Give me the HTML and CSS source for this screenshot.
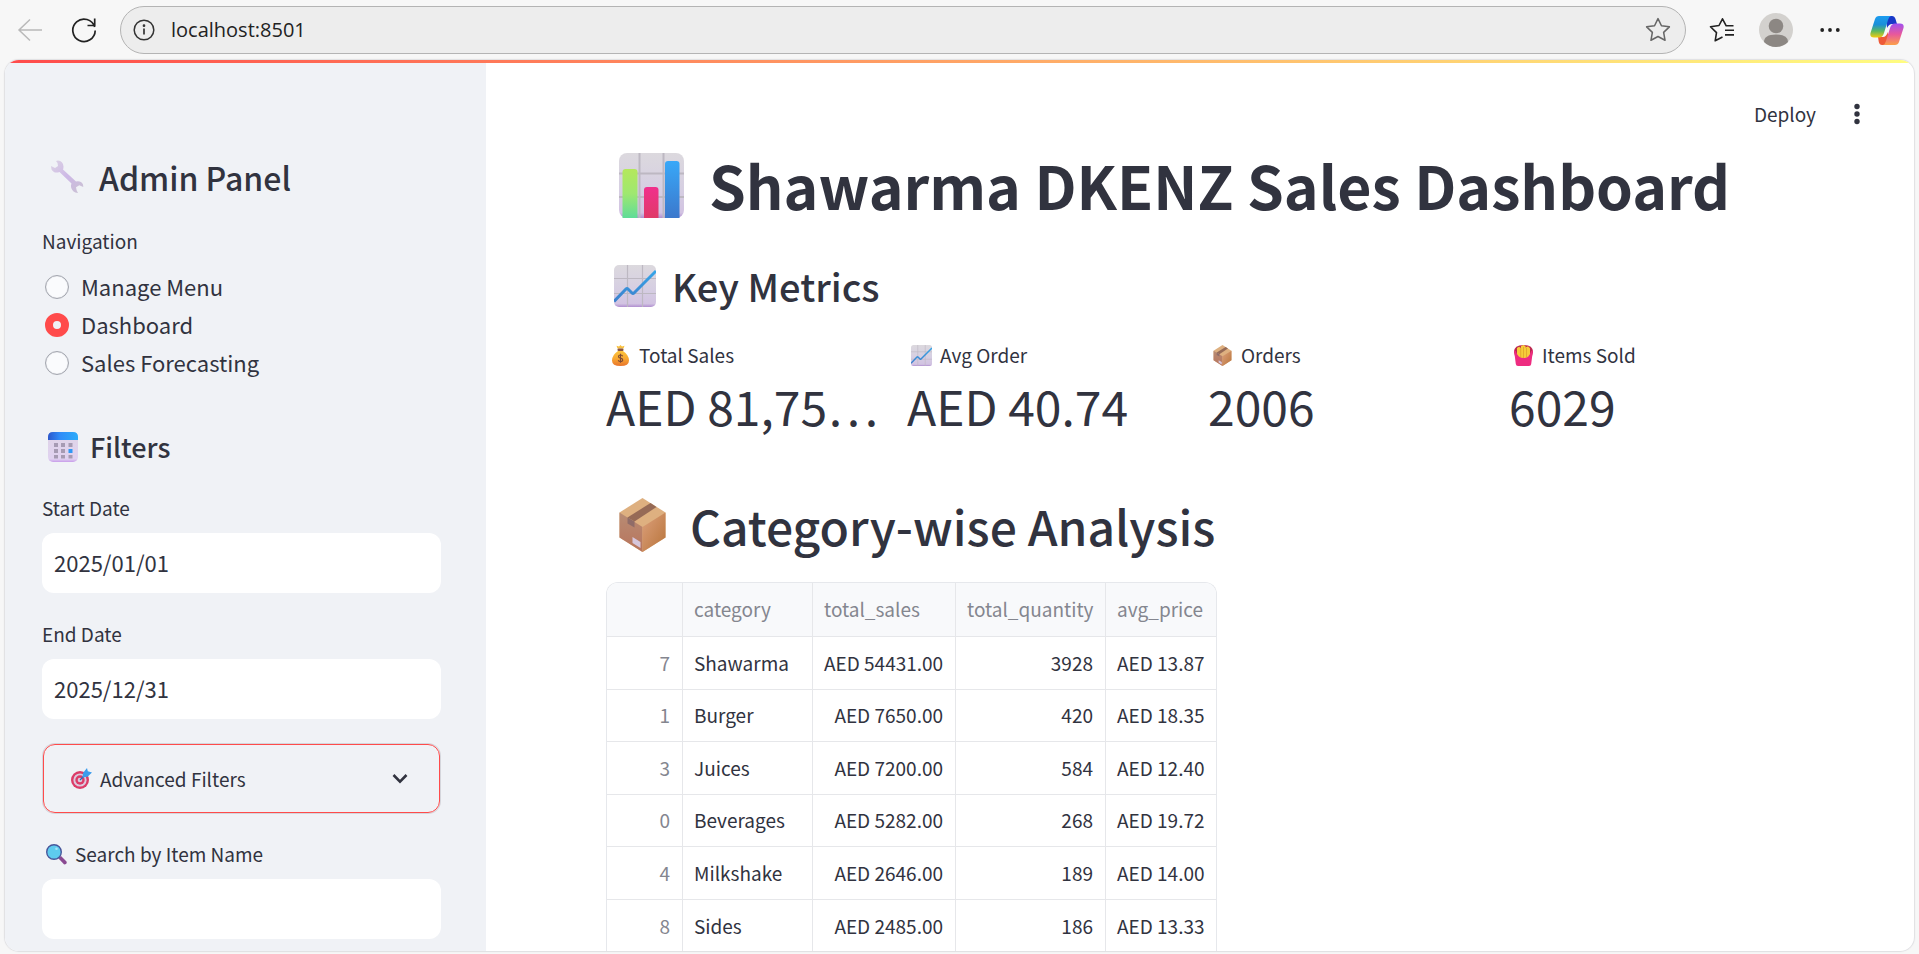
FILE: index.html
```html
<!DOCTYPE html>
<html lang="en">
<head>
<meta charset="utf-8">
<title>Shawarma DKENZ Sales Dashboard</title>
<link rel="stylesheet" href="styles.css">
</head>
<body>
<svg class="defs" aria-hidden="true">
  <defs>
    <linearGradient id="tile" x1="0" y1="0" x2="0" y2="1"><stop offset="0" stop-color="#dcd9de"/><stop offset=".55" stop-color="#d6cfe2"/><stop offset=".92" stop-color="#d2c3e2"/><stop offset="1" stop-color="#b08fd0"/></linearGradient>
    <linearGradient id="line" x1="0" y1="0" x2="0" y2="1"><stop offset="0" stop-color="#35a5e8"/><stop offset="1" stop-color="#3c80cc"/></linearGradient>
    <linearGradient id="green" x1="0" y1="0" x2="0" y2="1"><stop offset="0" stop-color="#b4e85c"/><stop offset=".5" stop-color="#9fe870"/><stop offset="1" stop-color="#5fdc98"/></linearGradient>
    <linearGradient id="pink" x1="0" y1="0" x2="0" y2="1"><stop offset="0" stop-color="#f0308c"/><stop offset="1" stop-color="#e03a68"/></linearGradient>
    <linearGradient id="blue" x1="0" y1="0" x2="0" y2="1"><stop offset="0" stop-color="#38a8f8"/><stop offset="1" stop-color="#3c78cc"/></linearGradient>
    <linearGradient id="boxL" x1="0" y1="0" x2="0" y2="1"><stop offset="0" stop-color="#b88c74"/><stop offset="1" stop-color="#b8745c"/></linearGradient>
    <linearGradient id="boxR" x1="0" y1="0" x2="1" y2="1"><stop offset="0" stop-color="#dca07c"/><stop offset="1" stop-color="#b8743a"/></linearGradient>
    <linearGradient id="bag" x1="0" y1="0" x2="0" y2="1"><stop offset="0" stop-color="#fcc43c"/><stop offset=".5" stop-color="#f8a832"/><stop offset="1" stop-color="#e8742c"/></linearGradient>
    <linearGradient id="steel" x1="0" y1="0" x2="1" y2="1"><stop offset="0" stop-color="#dcd4e4"/><stop offset=".5" stop-color="#cdb8e6"/><stop offset="1" stop-color="#cac2d2"/></linearGradient>
    <linearGradient id="calTop" x1="0" y1="0" x2="1" y2="0"><stop offset="0" stop-color="#2c58cc"/><stop offset=".4" stop-color="#308cf8"/><stop offset="1" stop-color="#2cacfa"/></linearGradient>
    <linearGradient id="calBody" x1="0" y1="0" x2="0" y2="1"><stop offset="0" stop-color="#dfd5e6"/><stop offset=".9" stop-color="#e0d2f0"/><stop offset="1" stop-color="#c89cea"/></linearGradient>
    <linearGradient id="cpA" x1="0" y1="0" x2="0" y2="1"><stop offset="0" stop-color="#1c9cf0"/><stop offset=".4" stop-color="#1a8fd8"/><stop offset=".7" stop-color="#5cb860"/><stop offset="1" stop-color="#f4cc10"/></linearGradient>
    <linearGradient id="cpB" x1="0" y1="0" x2="0" y2="1"><stop offset="0" stop-color="#a050f0"/><stop offset=".5" stop-color="#e8589c"/><stop offset="1" stop-color="#fca048"/></linearGradient>
    <symbol id="chart" viewBox="0 0 42 42">
      <rect width="42" height="42" rx="5" fill="url(#tile)"/>
      <path d="M13.500 0v42M28.500 0v42M0 13.500h42M0 28.500h42" stroke="#bdb8c2" stroke-width="1.200"/>
      <path d="M0 36.500 12 24q1-1 2 0l4 4q1 1 2 0L42 6" fill="none" stroke="url(#line)" stroke-width="3"/>
    </symbol>
    <symbol id="box" viewBox="0 0 46 54">
      <path d="M23 0 46 14.500v25L23 54 0 39.500v-25z" fill="#deb080"/>
      <path d="M0 14.500 23 29v25L0 39.500z" fill="url(#boxL)"/>
      <path d="M46 14.500 23 29v25l23-14.500z" fill="url(#boxR)"/>
      <path d="M31 5l6 4-22 14.500-7-4z" fill="#966a56"/><path d="M8 19.500l7 4v6l-7-4z" fill="#8f6c68"/>
      <path d="M13 39l8 5v6l-8-5z" fill="#d6c6dc"/>
    </symbol>
    <symbol id="star" viewBox="0 0 24 24"><path d="M12 1.500l3.200 6.600 7.300 1-5.300 5.100 1.300 7.300L12 18l-6.500 3.500 1.300-7.300L1.500 9.100l7.300-1z" fill="none" stroke="#666" stroke-width="1.400" stroke-linejoin="round"/></symbol>
  </defs>
</svg>

<header class="browser">
  <button class="tool" aria-label="Back"><svg width="26" height="26" viewBox="0 0 26 26" fill="none" stroke="#b9b9b9" stroke-width="1.500"><path d="M25 13H2M13 2.500 2 13l11 10.500"/></svg></button>
  <button class="tool reload" aria-label="Refresh"><svg width="26" height="26" viewBox="0 0 26 26" fill="none" stroke="#222" stroke-width="1.700"><path d="M23.700 10A11.200 11.200 0 1 0 24.200 13.500M23.700 1.500v7h-7.200"/></svg></button>
  <div class="address">
    <svg width="22" height="22" viewBox="0 0 22 22" fill="none" stroke="#333" stroke-width="1.500"><circle cx="11" cy="11" r="9.800"/><path d="M11 9.500v6" stroke-width="1.700"/><circle cx="11" cy="6.700" r=".6"/></svg>
    <input class="url" type="text" value="localhost:8501" aria-label="Address">
    <button class="tool" aria-label="Add to favorites"><svg width="26" height="26"><use href="#star"/></svg></button>
  </div>
  <div class="browser-actions">
    <button class="tool" aria-label="Favorites"><svg width="26" height="26" viewBox="0 0 26 26" fill="none" stroke="#222" stroke-width="1.600" stroke-linejoin="round"><path d="M24.500 8.800h-7.300L13.500 1.800 10 8.500l-8.500 1.200 6 5.900-1.300 8.200L13.500 20M16 13.300h9M16 17.900h9"/></svg></button>
    <button class="tool" aria-label="Profile"><svg width="34" height="34" viewBox="0 0 34 34"><circle cx="17" cy="17" r="17" fill="#d3d1ce"/><circle cx="17" cy="13" r="7.300" fill="#8c8783"/><path d="M5 29q0-7.500 12-7.500T29 29q-5 5-12 5T5 29z" fill="#8c8783"/></svg></button>
    <button class="tool more-tools" aria-label="Settings and more"><svg width="20" height="6" viewBox="0 0 20 6" fill="#222"><circle cx="2.200" cy="3" r="1.900"/><circle cx="10" cy="3" r="1.900"/><circle cx="17.800" cy="3" r="1.900"/></svg></button>
    <button class="tool" aria-label="Copilot"><svg width="34" height="31" viewBox="0 0 34 31"><path d="M16 1h6q2.500 0 3.500 3l1.500 5h-5q-3 0-5 4z" fill="#1838c8"/><path d="M18 30h-6q-2.500 0-3.200-3L8 22h5q3 0 5-5z" fill="#ee5a38"/><path d="M9 1h12q-2 .5-3 4l-4 13q-1.300 4.500-5 4.500H4Q-.500 22.500.500 18L5 4q1-3 4-3z" fill="url(#cpA)"/><path d="M25 8.500h5q4.500 0 3.500 4.500L29 27q-1 3-4 3H13q2-.500 3-4l4-13q1.300-4.500 5-4.500z" fill="url(#cpB)"/></svg></button>
  </div>
</header>

<div class="app">
  <aside class="sidebar">
    <h2 class="panel-title"><svg class="wrench" width="34" height="34" viewBox="0 0 34 34"><path d="M8 .5q5 .5 5.500 6 0 2-.5 3l13 12q5-1 7 3l.3 2.500-4-1.800-3.300 2 .7 3.300 1.300 2.500q-6-.5-7-6-.3-2 .5-3.500L9.500 12Q4 14 1.500 9.500L1 6l4 2 3-2L7.500 3 6 1z" fill="url(#steel)"/></svg>Admin Panel</h2>
    <fieldset class="nav">
      <legend class="label">Navigation</legend>
      <label class="option"><input type="radio" name="page"><span>Manage Menu</span></label>
      <label class="option"><input type="radio" name="page" checked><span>Dashboard</span></label>
      <label class="option"><input type="radio" name="page"><span>Sales Forecasting</span></label>
    </fieldset>
    <h3 class="filters-title"><svg width="30" height="30" viewBox="0 0 30 30"><rect width="30" height="30" rx="5" fill="url(#calBody)"/><path d="M0 8V5q0-5 5-5h20q5 0 5 5v3z" fill="url(#calTop)"/><path d="M6 11h4v4H6zm7 0h4v4h-4zm7.500 0h4v4h-4zM6 17h4v4H6zm7 0h4v4h-4zM6 23h4v3.500H6zm7 0h4v3.500h-4zm7.500 0h4v3.500h-4z" fill="#a69bb3"/><path d="M20.500 17h4v4h-4z" fill="#2f98f5"/></svg>Filters</h3>
    <div class="field">
      <label class="label" for="start">Start Date</label>
      <input class="box" id="start" type="text" value="2025/01/01">
    </div>
    <div class="field">
      <label class="label" for="end">End Date</label>
      <input class="box" id="end" type="text" value="2025/12/31">
    </div>
    <button class="expander">
      <svg class="emoji" viewBox="0 0 21 21"><circle cx="9" cy="12" r="9" fill="#dc3c68"/><circle cx="9" cy="12" r="6.600" fill="#dccade"/><circle cx="9" cy="12" r="4.700" fill="#dc3c68"/><circle cx="9" cy="12" r="2.300" fill="#dccade"/><path d="M9 12l6-6" stroke="#2868b8" stroke-width="1.300"/><path d="M11.500 9.500 12 5l4-5 .8 3.300L21 4.500l-4.500 4.300z" fill="#3c9cec"/></svg>
      <span>Advanced Filters</span>
      <svg class="chevron" width="16" height="12" viewBox="0 0 16 12" fill="none" stroke="#31333f" stroke-width="2.600"><path d="M1.500 2 8 8.700 14.500 2"/></svg>
    </button>
    <div class="field">
      <label class="label" for="search"><svg class="emoji" viewBox="0 0 21 21"><path d="M12 14l3-2 5.500 5.500q1 3-2.300 3z" fill="#8a4a92"/><circle cx="8" cy="8" r="7.300" fill="#5ecbee" stroke="#48589c" stroke-width="1.400"/><circle cx="10.500" cy="4.800" r="1.300" fill="#a4e4f8"/></svg>Search by Item Name</label>
      <input class="box" id="search" type="text">
    </div>
  </aside>

  <main class="main">
    <div class="app-bar">
      <button class="deploy">Deploy</button>
      <button class="tool" aria-label="Main menu"><svg width="6" height="22" viewBox="0 0 6 22" fill="#31333f"><circle cx="3" cy="3.500" r="2.700"/><circle cx="3" cy="11" r="2.700"/><circle cx="3" cy="18.500" r="2.700"/></svg></button>
    </div>
    <div class="content">
      <h1 class="title"><svg width="65" height="65" viewBox="0 0 65 65"><rect width="65" height="65" rx="8" fill="url(#tile)"/><path d="M20.500 0v65M44.500 0v65M0 20.500h65M0 44h65" stroke="#bdb8c2" stroke-width="2"/><path d="M3.500 65V19q0-3 3-3h9q3 0 3 3v46z" fill="url(#green)"/><path d="M25 65V37q0-3 3-3h8.500q3 0 3 3v28z" fill="url(#pink)"/><path d="M46 65V11q0-3 3-3h8.500q3 0 3 3v54z" fill="url(#blue)"/></svg>Shawarma DKENZ Sales Dashboard</h1>
      <h2 class="metrics-title"><svg width="42" height="42"><use href="#chart"/></svg>Key Metrics</h2>
      <section class="metrics">
        <div class="metric">
          <div class="metric-label"><svg class="emoji" viewBox="0 0 21 21"><path d="M7.500 3.500 6.500.800l2.500.7L10.500 0l1.500 1.500 2.500-.7-1 2.700z" fill="#f8c040"/><path d="M8 6h5q6 4 6 9.500 0 5.500-8.500 5.500T2 15.500Q2 10 8 6z" fill="url(#bag)"/><rect x="7.500" y="3.500" width="6" height="2.500" rx="1" fill="#8a5440"/><path d="M12.700 11.200q-.7-1.200-2.200-1.200-2 0-2 1.500 0 1.300 2 1.600 2.200.300 2.200 1.800 0 1.600-2.200 1.600-1.700 0-2.300-1.300M10.500 8.700v9" fill="none" stroke="#7c4a34" stroke-width="1.100"/></svg>Total Sales</div>
          <div class="metric-value">AED 81,75…</div>
        </div>
        <div class="metric">
          <div class="metric-label"><svg class="emoji"><use href="#chart"/></svg>Avg Order</div>
          <div class="metric-value">AED 40.74</div>
        </div>
        <div class="metric">
          <div class="metric-label"><svg class="emoji"><use href="#box"/></svg>Orders</div>
          <div class="metric-value">2006</div>
        </div>
        <div class="metric">
          <div class="metric-label"><svg class="emoji" viewBox="0 0 21 21"><path d="M1 7q0-7 9.500-7T20 7l-1 4H2z" fill="#bc2850"/><path d="M4 3l2-1.200 2 1.200V1l2.500-1 2 1v1.500L15 1.200l2 2V10q-3 4-6.500 4T4 10z" fill="#f6cc3a"/><path d="M7.700 3v9M10.500 2v11M13.500 3v9" stroke="#dc9c28" stroke-width=".7"/><path d="M1 5q2 .500 3 4 2 4 6.500 4t6.500-4q1-3.500 3-4l-1.800 14q-.2 2-2.200 2H5q-2 0-2.200-2z" fill="#ee2c80"/></svg>Items Sold</div>
          <div class="metric-value">6029</div>
        </div>
      </section>
      <h1 class="category-title"><svg width="47" height="54"><use href="#box"/></svg>Category-wise Analysis</h1>
      <div class="table-frame">
        <table class="data">
          <colgroup><col class="c-index"><col class="c-name"><col class="c-sales"><col class="c-qty"><col class="c-price"></colgroup>
          <thead><tr><th></th><th>category</th><th>total_sales</th><th>total_quantity</th><th>avg_price</th></tr></thead>
          <tbody>
            <tr><td>7</td><td>Shawarma</td><td>AED 54431.00</td><td>3928</td><td>AED 13.87</td></tr>
            <tr><td>1</td><td>Burger</td><td>AED 7650.00</td><td>420</td><td>AED 18.35</td></tr>
            <tr><td>3</td><td>Juices</td><td>AED 7200.00</td><td>584</td><td>AED 12.40</td></tr>
            <tr><td>0</td><td>Beverages</td><td>AED 5282.00</td><td>268</td><td>AED 19.72</td></tr>
            <tr><td>4</td><td>Milkshake</td><td>AED 2646.00</td><td>189</td><td>AED 14.00</td></tr>
            <tr><td>8</td><td>Sides</td><td>AED 2485.00</td><td>186</td><td>AED 13.33</td></tr>
          </tbody>
        </table>
      </div>
    </div>
  </main>
</div>
</body>
</html>
```
FILE: styles.css
```css
* { box-sizing: border-box; }

body {
  margin: 0;
  height: 100vh;
  display: flex;
  flex-direction: column;
  overflow: hidden;
  background: #f7f7f7;
  color: #31333f;
  font-family: "Noto Sans CJK KR", "Noto Sans CJK JP", "Noto Sans", sans-serif;
  font-size: 19px;
  line-height: 32px;
}

h1, h2, h3 { margin: 0; font-weight: 500; display: flex; align-items: center; white-space: nowrap; }
svg { display: block; flex: none; }
button, input { font: inherit; color: inherit; }
.defs { position: absolute; width: 0; height: 0; }

.tool { display: flex; padding: 0; border: 0; background: none; }

/* Browser bar */
.browser { display: flex; align-items: center; height: 60px; flex: none; padding: 0 15px 0 17px; }
.reload { margin: 0 23px 0 28px; }
.address {
  flex: 1;
  display: flex;
  align-items: center;
  height: 48px;
  padding: 0 14px 0 12px;
  border: 1px solid #b4b4b4;
  border-radius: 24px;
  background: #ededed;
}
.url {
  flex: 1;
  min-width: 0;
  margin-left: 16px;
  padding: 0;
  border: 0;
  background: none;
  outline: 0;
  color: #222;
  font-family: "Open Sans", "Noto Sans", sans-serif;
  font-size: 20px;
}
.browser-actions { display: flex; align-items: center; margin-left: 23px; gap: 24px; }
.more-tools { margin: 0 6px 0 3px; }

/* App frame */
.app {
  position: relative;
  flex: 1;
  min-height: 0;
  display: flex;
  margin: 0 5px 3px;
  border-radius: 14px;
  overflow: hidden;
  background: #fff;
  box-shadow: 0 0 1px 1px #dfdfe2;
}
.app::before {
  content: "";
  position: absolute;
  inset: 0 0 auto;
  height: 3px;
  background: linear-gradient(90deg, #ff4b4b, #fffd80);
}

/* Sidebar */
.sidebar {
  flex: none;
  width: 481px;
  padding: 95px 45px 0 37px;
  background: #f0f2f6;
}
.panel-title { font-size: 32px; line-height: 44px; gap: 15px; padding-left: 8px; }
.nav { margin: 26px 0 0; padding: 0; border: 0; }
.label { display: flex; align-items: center; padding: 0 0 1px; line-height: 32px; }
.nav .label { margin-bottom: 10px; }
.option { display: flex; align-items: center; height: 38px; padding-left: 3px; gap: 12px; font-size: 22px; }
.option span { padding-bottom: 2px; }
.option input {
  appearance: none;
  width: 24px;
  height: 24px;
  margin: 0;
  border: 1px solid #a3a6af;
  border-radius: 50%;
  background: #fafbfd;
  box-shadow: inset 0 0 1px #a3a6af;
}
.option input:checked { border: 8px solid #ff4b4b; background: #f0f2f6; box-shadow: none; }
.filters-title { margin-top: 45px; padding-left: 6px; gap: 12px; font-size: 27px; line-height: 40px; }
.field { margin-top: 25px; }
.box {
  display: block;
  width: 100%;
  height: 60px;
  margin-top: 8px;
  padding: 0 12px 2px;
  border: 0;
  border-radius: 12px;
  background: #fff;
  font-size: 22px;
}
.emoji { width: 21px; height: 21px; margin: 0 8px 0 4px; }
.expander {
  display: flex;
  align-items: center;
  width: calc(100% - 2px);
  height: 69px;
  margin: 25px 1px 0;
  padding: 0 31px 0 23px;
  border: 1px solid #ff4b4b;
  border-radius: 12px;
  background: none;
  box-shadow: 0 0 0 1px #d5d6dc;
}
.chevron { margin-left: auto; }

/* Main column */
.main { flex: 1; min-width: 0; }
.app-bar { display: flex; justify-content: flex-end; align-items: center; gap: 38px; padding: 34px 54px 0 0; height: 74px; }
.deploy { padding: 0; border: 0; background: none; }
.content { padding: 11px 128px 0 120px; }
.title { padding-left: 13px; gap: 25px; font-size: 59px; font-weight: 700; line-height: 80px; }
.metrics-title { margin-top: 33px; padding-left: 8px; gap: 16px; font-size: 38px; line-height: 56px; }
.metrics { display: grid; grid-template-columns: repeat(4, 1fr); gap: 24px; margin-top: 25px; }
.metric { min-width: 0; }
.metric-label { display: flex; align-items: center; }
.metric-value { margin-top: 2px; font-size: 48px; line-height: 64px; white-space: nowrap; }
.category-title { margin-top: 56px; padding-left: 13px; gap: 24px; font-size: 48px; line-height: 64px; }

/* Data table */
.table-frame {
  width: fit-content;
  margin-top: 25px;
  border: 1px solid #e6e8ec;
  border-bottom: 0;
  border-radius: 12px 12px 0 0;
  overflow: hidden;
}
.data { table-layout: fixed; width: 609px; border-collapse: separate; border-spacing: 0; }
.c-index { width: 76px; }
.c-name { width: 130px; }
.c-sales { width: 143px; }
.c-qty { width: 150px; }
.data th, .data td {
  padding: 0 12px 1px 11px;
  border-right: 1px solid #e6e7ea;
  border-bottom: 1px solid #e6e7ea;
  text-align: right;
  white-space: nowrap;
}
.data th:last-child, .data td:last-child { border-right: 0; }
.data th { height: 54px; background: #f8f9fb; color: #84868f; font-weight: 400; text-align: left; }
.data td { height: 53px; }
.data tr:nth-child(even) td { height: 52px; }
.data tbody tr:last-child td { border-bottom: 0; }
.data td:first-child { color: #84868f; }
.data td:nth-child(2) { text-align: left; }
```
